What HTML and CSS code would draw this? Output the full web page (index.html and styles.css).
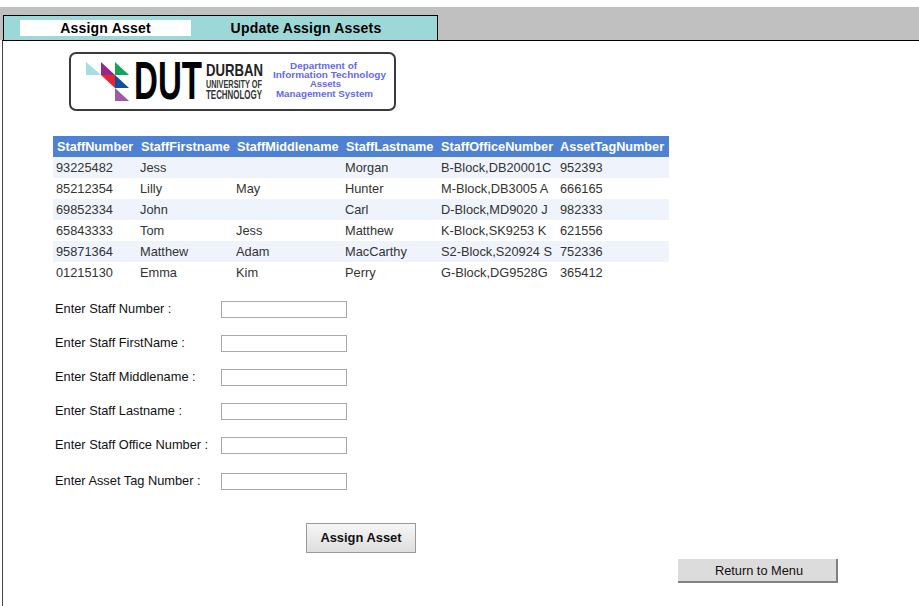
FILE: index.html
```html
<!DOCTYPE html>
<html lang="en">
<head>
    <meta charset="UTF-8">
    <meta name="viewport" content="width=device-width, initial-scale=1.0">
    <title>Assign Asset</title>
    <link rel="stylesheet" href="styles.css">
</head>
<body>
    <header class="tab-bar">
        <nav class="tabs">
            <a class="tab tab-active" href="#">Assign Asset</a>
            <a class="tab" href="#">Update Assign Assets</a>
        </nav>
    </header>
    <main class="panel">
        <div class="logo">
            <svg width="327" height="60" viewBox="0 0 327 60">
                <rect x="1" y="1" width="325" height="57" rx="6" fill="#fff" stroke="#3a3a3a" stroke-width="2"/>
                <polygon points="17,10 17,23 32,23" fill="#a5dde0"/>
                <polygon points="32,10 32,23 46,23" fill="#93278f"/>
                <polygon points="46,10 46,23 60,23" fill="#12a65c"/>
                <polygon points="32,23 46,23 46,36" fill="#e8262d"/>
                <polygon points="46,23 46,36 60,36" fill="#0f4fa3"/>
                <polygon points="46,36 46,49 60,49" fill="#9b59a8"/>
                <text class="logo-dut" x="65" y="47" textLength="68" lengthAdjust="spacingAndGlyphs">DUT</text>
                <text class="logo-durban" x="137" y="24" textLength="57" lengthAdjust="spacingAndGlyphs">DURBAN</text>
                <text class="logo-uni" x="137" y="35.5" textLength="56" lengthAdjust="spacingAndGlyphs">UNIVERSITY OF</text>
                <text class="logo-tech" x="137" y="47" textLength="56" lengthAdjust="spacingAndGlyphs">TECHNOLOGY</text>
                <text class="logo-dept" x="221" y="17" textLength="67" lengthAdjust="spacingAndGlyphs">Department of</text>
                <text class="logo-dept" x="204" y="26" textLength="113" lengthAdjust="spacingAndGlyphs">Information Technology</text>
                <text class="logo-dept" x="241" y="35" textLength="31" lengthAdjust="spacingAndGlyphs">Assets</text>
                <text class="logo-dept" x="207" y="45" textLength="97" lengthAdjust="spacingAndGlyphs">Management System</text>
            </svg>
        </div>

        <table class="staff-table">
            <thead>
                <tr>
                    <th class="col-number">StaffNumber</th>
                    <th class="col-first">StaffFirstname</th>
                    <th class="col-middle">StaffMiddlename</th>
                    <th class="col-last">StaffLastname</th>
                    <th class="col-office">StaffOfficeNumber</th>
                    <th class="col-tag">AssetTagNumber</th>
                </tr>
            </thead>
            <tbody>
                <tr><td>93225482</td><td>Jess</td><td></td><td>Morgan</td><td>B-Block,DB20001C</td><td>952393</td></tr>
                <tr><td>85212354</td><td>Lilly</td><td>May</td><td>Hunter</td><td>M-Block,DB3005 A</td><td>666165</td></tr>
                <tr><td>69852334</td><td>John</td><td></td><td>Carl</td><td>D-Block,MD9020 J</td><td>982333</td></tr>
                <tr><td>65843333</td><td>Tom</td><td>Jess</td><td>Matthew</td><td>K-Block,SK9253 K</td><td>621556</td></tr>
                <tr><td>95871364</td><td>Matthew</td><td>Adam</td><td>MacCarthy</td><td>S2-Block,S20924 S</td><td>752336</td></tr>
                <tr><td>01215130</td><td>Emma</td><td>Kim</td><td>Perry</td><td>G-Block,DG9528G</td><td>365412</td></tr>
            </tbody>
        </table>

        <form class="assign-form">
            <label for="staffNumber">Enter Staff Number :</label>
            <input type="text" id="staffNumber">
            <label for="staffFirst">Enter Staff FirstName :</label>
            <input type="text" id="staffFirst">
            <label for="staffMiddle">Enter Staff Middlename :</label>
            <input type="text" id="staffMiddle">
            <label for="staffLast">Enter Staff Lastname :</label>
            <input type="text" id="staffLast">
            <label for="staffOffice">Enter Staff Office Number :</label>
            <input type="text" id="staffOffice">
            <label class="row-tag" for="assetTag">Enter Asset Tag Number :</label>
            <input class="row-tag" type="text" id="assetTag">
        </form>

        <button class="btn-assign" type="button">Assign Asset</button>
        <button class="btn-return" type="button">Return to Menu</button>
    </main>
</body>
</html>
```

FILE: styles.css
```css
html, body {
    margin: 0;
    padding: 0;
    height: 100%;
    overflow: hidden;
    background-color: #fff;
}
body {
    font-family: "Liberation Sans", Arial, sans-serif;
    color: #222;
}
.tab-bar {
    margin-top: 7px;
    padding: 8px 0 0 3px;
    background-color: #c0c0c0;
    height: 25px;
}
.tabs {
    display: flex;
    box-sizing: border-box;
    width: 435px;
    height: 25px;
    padding: 4px 16px 4px 16px;
    background-color: #9cd8d8;
    border: 1px solid #000;
    border-bottom: none;
}
.tab {
    width: 171px;
    height: 16px;
    line-height: 17px;
    font-size: 14px;
    font-weight: bold;
    letter-spacing: 0.2px;
    text-align: center;
    text-decoration: none;
    color: #000;
}
.tab-active {
    background-color: #fff;
}
.tab + .tab {
    flex: 1;
}
.panel {
    box-sizing: border-box;
    height: 566px;
    margin-left: 2px;
    border-top: 1px solid #000;
    border-left: 1px solid #444;
    background-color: #fff;
}
.logo {
    padding: 11px 0 0 66px;
    height: 84px;
}
.logo svg {
    display: block;
}
.logo-dut {
    font-weight: bold;
    font-size: 53px;
    fill: #000;
}
.logo-durban {
    font-weight: bold;
    font-size: 17px;
    fill: #222;
}
.logo-uni {
    font-weight: bold;
    font-size: 11.5px;
    fill: #333;
}
.logo-tech {
    font-weight: bold;
    font-size: 12.5px;
    fill: #333;
}
.logo-dept {
    font-weight: bold;
    font-size: 9px;
    fill: #6468ee;
}
.staff-table {
    margin-left: 50px;
    width: 616px;
    border-collapse: collapse;
    table-layout: fixed;
    font-size: 12.8px;
}
.staff-table th {
    box-sizing: border-box;
    height: 21px;
    padding: 0 0 0 4px;
    background-color: #4f81d3;
    color: #fff;
    font-size: 12.7px;
    font-weight: bold;
    text-align: left;
    white-space: nowrap;
}
.staff-table td {
    height: 21px;
    padding: 0 0 0 3px;
    white-space: nowrap;
    color: #333;
}
.staff-table td:nth-child(n+5) {
    padding-left: 4px;
}
.staff-table tbody tr:nth-child(odd) td {
    background-color: #eff3fb;
}
.col-number { width: 84px; }
.col-first { width: 96px; }
.col-middle { width: 109px; }
.col-last { width: 95px; }
.col-office { width: 119px; }
.col-tag { width: 113px; }
.assign-form {
    display: grid;
    grid-template-columns: 166px 126px;
    grid-auto-rows: 18px;
    row-gap: 16px;
    align-items: center;
    margin: 18px 0 0 52px;
    font-size: 12.8px;
    color: #111;
}
.assign-form label {
    white-space: nowrap;
    position: relative;
    top: -2px;
}
.assign-form input {
    align-self: start;
    box-sizing: border-box;
    width: 126px;
    height: 17px;
    margin: 0;
    padding: 0 2px;
    border: 1px solid #a9a9a9;
    background-color: #fff;
}
.assign-form label.row-tag {
    margin-top: 5px;
}
.assign-form input.row-tag {
    margin-top: 2px;
}
.btn-assign {
    display: block;
    box-sizing: border-box;
    width: 110px;
    height: 30px;
    margin: 34px 0 0 303px;
    padding: 0 0 2px;
    border: 1px solid #999;
    background: linear-gradient(#f6f6f6, #dedede);
    font-family: inherit;
    font-size: 12.9px;
    font-weight: bold;
    color: #111;
}
.btn-return {
    display: block;
    box-sizing: border-box;
    width: 160px;
    height: 24px;
    margin: 6px 0 0 675px;
    padding: 0 0 0 4px;
    border: none;
    border-right: 2px solid #808080;
    border-bottom: 2px solid #808080;
    background-color: #dcdcdc;
    font-family: inherit;
    font-size: 12.8px;
    color: #111;
}
```
